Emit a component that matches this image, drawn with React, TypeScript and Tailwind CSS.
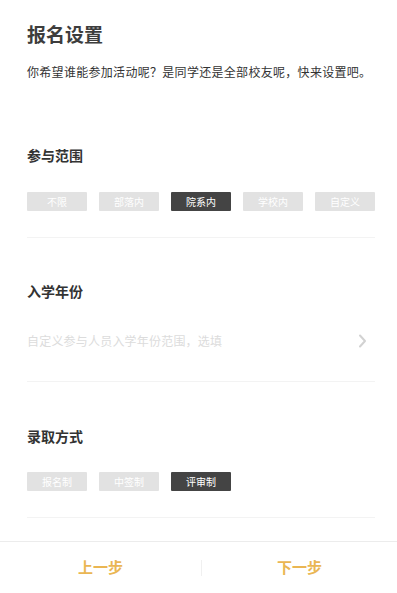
import { useState } from "react";

const font = { fontFamily: '"Noto Sans CJK SC", "Noto Sans", sans-serif' };

const Chips = ({ items, active, onPick }: { items: string[]; active: number; onPick: (i: number) => void }) => (
  <div className="flex gap-[12px]">
    {items.map((label, i) => (
      <button
        key={label}
        onClick={() => onPick(i)}
        className={
          i === active
            ? "w-[60px] shrink-0 h-[19px] rounded-[1px] bg-[#444444] text-white text-[10px] leading-[19px]"
            : "w-[60px] shrink-0 h-[19px] rounded-[1px] bg-[#e2e2e2] text-white text-[10px] leading-[19px]"
        }
      >
        {label}
      </button>
    ))}
  </div>
);

const App = () => {
  const [scope, setScope] = useState(2);
  const [mode, setMode] = useState(2);

  return (
    <div className="h-screen flex flex-col bg-white" style={font}>
      <div className="flex-1 pl-[27px] pr-[22px] pt-[20px]">
        {/* Header */}
        <h1 className="text-[19px] leading-[28px] font-bold text-[#3d3d3d]">报名设置</h1>
        <p className="mt-[14px] text-[12px] leading-[20px] text-[#333] tracking-[0.3px]">
          你希望谁能参加活动呢？是同学还是全部校友呢，快来设置吧。
        </p>

        {/* 参与范围 */}
        <h2 className="mt-[63px] text-[14px] leading-[20px] font-bold text-[#333]">参与范围</h2>
        <div className="mt-[27px]">
          <Chips items={["不限", "部落内", "院系内", "学校内", "自定义"]} active={scope} onPick={setScope} />
        </div>
        <div className="mt-[26px] h-px bg-[#f3f3f3]" />

        {/* 入学年份 */}
        <h2 className="mt-[43px] text-[14px] leading-[20px] font-bold text-[#333]">入学年份</h2>
        <div className="mt-[30px] flex items-center justify-between">
          <span className="text-[12px] leading-[20px] text-[#dcdcdc] tracking-[0.2px]">自定义参与人员入学年份范围，选填</span>
          <svg width="16" height="16" viewBox="0 0 16 16" className="mr-[5px]">
            <path d="M6 2.5 L11 8 L6 13.5" fill="none" stroke="#d2d2d2" strokeWidth="2" strokeLinecap="round" strokeLinejoin="round" />
          </svg>
        </div>
        <div className="mt-[30px] h-px bg-[#f3f3f3]" />

        {/* 录取方式 */}
        <h2 className="mt-[44px] text-[14px] leading-[20px] font-bold text-[#333]">录取方式</h2>
        <div className="mt-[26px]">
          <Chips items={["报名制", "中签制", "评审制"]} active={mode} onPick={setMode} />
        </div>
        <div className="mt-[26px] h-px bg-[#f3f3f3]" />
      </div>

      {/* Footer */}
      <div className="h-[52px] border-t border-[#ececec] flex items-center shrink-0">
        <button className="w-[201px] text-[15px] font-bold text-[#eab653]">上一步</button>
        <div className="w-px h-[16px] bg-[#f0f0f0]" />
        <button className="flex-1 text-[15px] font-bold text-[#eab653]">下一步</button>
      </div>
    </div>
  );
};

export default App;
